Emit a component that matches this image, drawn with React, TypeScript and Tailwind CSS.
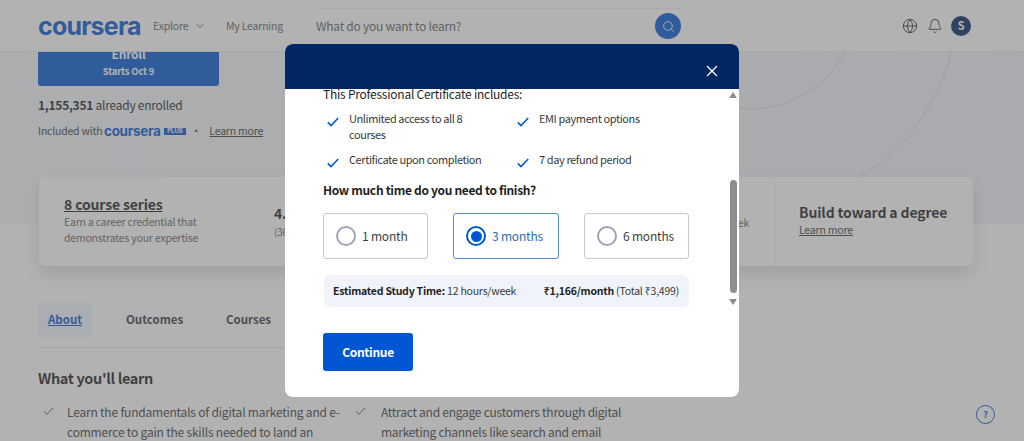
import React from "react";
import { Check, ChevronDown, Globe, Bell, Search, X } from "lucide-react";

function Tick({ className }: { className: string }) {
  return (
    <svg viewBox="0 0 12 10" className={className} fill="none" stroke="currentColor" strokeWidth="1.5">
      <path d="M0.8 5.4 L4 8.6 L11.2 1" />
    </svg>
  );
}

function Feature({ children, wide }: { children: React.ReactNode; wide?: boolean }) {
  return (
    <div className="flex items-start">
      <Tick className="mt-[7px] ml-[4px] h-[10px] w-[12px] shrink-0 text-[#0056d2]" />
      <p className={`ml-[10px] text-[11px] leading-[16px] tracking-[-0.4px] text-[#373a3c] ${wide ? "w-[125px]" : ""}`}>{children}</p>
    </div>
  );
}

function Option({ label, selected, width }: { label: string; selected?: boolean; width: string }) {
  return (
    <div
      className={`flex h-[46px] items-center rounded-[3px] border pl-[12px] ${width} ${
        selected ? "border-[#4f8fc6]" : "border-[#c4c6cc]"
      }`}
    >
      {selected ? (
        <span className="flex h-[20px] w-[20px] items-center justify-center rounded-full border-2 border-[#0056d2]">
          <span className="h-[11px] w-[11px] rounded-full bg-[#0056d2]" />
        </span>
      ) : (
        <span className="h-[20px] w-[20px] rounded-full border-2 border-[#9fa3b8]" />
      )}
      <span className={`ml-[6px] text-[12px] leading-[20px] tracking-[-0.2px] ${selected ? "text-[#2d6db5]" : "text-[#3d3f42]"}`}>{label}</span>
    </div>
  );
}

export default function App() {
  return (
    <div className="relative h-[441px] w-[1024px] overflow-hidden bg-white font-['Noto_Sans_CJK_SC','Noto_Sans',sans-serif] tracking-[-0.2px] text-[#1f1f1f]">
      {/* Site header */}
      <header className="flex h-[52px] items-center border-b border-[#e5e7ea] bg-white pl-[38px]">
        <span className="w-[102px] font-['Inter',sans-serif] text-[25px] leading-[30px] font-bold tracking-[-0.8px] text-[#0056d2]">
          coursera
        </span>
        <span className="ml-[13px] w-[35px] text-[10.5px] text-[#5b5f63]">Explore</span>
        <ChevronDown className="ml-[6px] h-[12px] w-[12px] text-[#5b5f63]" strokeWidth={2} />
        <span className="ml-[20px] w-[57px] text-[10.5px] text-[#5b5f63]">My Learning</span>
        <div className="ml-[33px] flex h-[36px] w-[365px] items-center justify-between border-t border-[#ededed]">
          <span className="text-[12px] tracking-[-0.25px] text-[#5b5f63]">What do you want to learn?</span>
          <span className="flex h-[26px] w-[26px] items-center justify-center rounded-full bg-[#0056d2]">
            <Search className="h-[13px] w-[13px] text-white" strokeWidth={1.6} />
          </span>
        </div>
        <div className="ml-[221px] flex items-center">
          <Globe className="h-[16px] w-[16px] text-[#333]" strokeWidth={1.5} />
          <Bell className="ml-[9px] h-[16px] w-[16px] text-[#333]" strokeWidth={1.5} />
          <span className="ml-[8px] flex h-[20px] w-[20px] items-center justify-center rounded-full bg-[#002761] text-[11px] font-bold text-white">
            S
          </span>
        </div>
      </header>

      {/* Hero */}
      <section className="relative h-[172px] overflow-hidden bg-[linear-gradient(90deg,#f4f7fb,#f0f4f9_50%,#eef2f8)] pl-[38px]">
        <svg className="absolute top-0 left-[700px] h-[172px] w-[324px]" viewBox="700 52 324 172" fill="none" stroke="#d4d8de">
          <circle cx="750" cy="1" r="108" />
          <circle cx="750" cy="1" r="208" />
        </svg>
        <div className="relative -mt-[7px] flex h-[41px] w-[181px] flex-col items-center rounded-[3px] bg-[#0056d2] text-white">
          <span className="text-[12px] leading-[18px] font-semibold">Enroll</span>
          <span className="-mt-[1px] text-[9.5px] leading-[18px] font-semibold tracking-[-0.2px]">Starts Oct 9</span>
        </div>
        <p className="relative mt-[10px] text-[12px] leading-[18px] tracking-[-0.25px]">
          <b className="font-bold">1,155,351</b> already enrolled
        </p>
        <div className="relative mt-[8px] flex items-center whitespace-nowrap text-[10.5px] leading-[18px] text-[#373a3c]">
          <span className="w-[64px]">Included with</span>
          <span className="ml-[2px] w-[56px] font-['Inter',sans-serif] text-[13.5px] leading-[16px] font-bold tracking-[-0.3px] text-[#0056d2]">
            coursera
          </span>
          <span className="ml-[4px] flex h-[7px] w-[22px] items-center justify-center bg-[#0056d2] font-['Inter',sans-serif] text-[6px] font-bold tracking-normal text-white">
            PLUS
          </span>
          <span className="ml-[5px]">•</span>
          <span className="ml-[8px] underline">Learn more</span>
        </div>
      </section>

      {/* Stats card */}
      <div className="relative z-10 -mt-[47px] ml-[39px] flex h-[89px] w-[934px] items-stretch rounded-[6px] bg-white shadow-[0_8px_16px_rgba(0,0,0,0.14)]">
        <div className="w-[235px] pt-[17px] pl-[25px]">
          <p className="text-[14px] leading-[20px] font-semibold tracking-[-0.15px] text-[#1f1f1f] underline">8 course series</p>
          <p className="mt-0 text-[10.5px] leading-[16px] text-[#636363]">Earn a career credential that</p>
          <p className="text-[10.5px] leading-[16px] text-[#636363]">demonstrates your expertise</p>
        </div>
        <div className="w-[200px] pt-[25px]">
          <p className="text-[14px] leading-[22px] font-semibold">4.7</p>
          <p className="text-[10px] leading-[16px] text-[#636363]">(36,000 reviews)</p>
        </div>
        <div className="w-[301px] pt-[38px] pr-[26px] text-right">
          <p className="text-[10.5px] leading-[16px] text-[#636363]">10 hours a week</p>
        </div>
        <div className="flex-1 border-l border-[#f6f6f6] pt-[25px] pl-[23px]">
          <p className="text-[14px] leading-[20px] font-semibold tracking-[-0.12px] text-[#1f1f1f]">Build toward a degree</p>
          <p className="text-[10.5px] leading-[16px] text-[#373a3c] underline">Learn more</p>
        </div>
      </div>

      {/* Tabs */}
      <nav className="mt-[37px] ml-[38px] flex h-[34px] items-center text-[11.5px] font-semibold tracking-normal text-[#373a3c]">
        <span className="flex h-[34px] w-[54px] items-center justify-center rounded-[3px] bg-[#f0f6ff] text-[#0056d2] underline">
          About
        </span>
        <span className="ml-[34px] w-[56px]">Outcomes</span>
        <span className="ml-[44px]">Courses</span>
      </nav>
      <div className="mt-[10px] ml-[40px] h-px w-[680px] bg-[#e5e7ea]" />

      {/* What you'll learn */}
      <h2 className="mt-[18px] ml-[38px] text-[14.5px] leading-[24px] font-semibold tracking-[-0.35px]">What you'll learn</h2>
      <div className="mt-[12px] ml-[42px] flex">
        <div className="flex w-[312px]">
          <Check className="mt-[3px] h-[13px] w-[13px] shrink-0 text-[#333]" strokeWidth={1.5} />
          <p className="ml-[12px] w-[280px] text-[12px] leading-[20px] tracking-[-0.2px] text-[#373a3c]">
            Learn the fundamentals of digital marketing and e-commerce to gain the skills needed to land an entry-level job
          </p>
        </div>
        <div className="flex">
          <Check className="mt-[3px] h-[13px] w-[13px] shrink-0 text-[#333]" strokeWidth={1.5} />
          <p className="ml-[14px] w-[260px] text-[12px] leading-[20px] tracking-[-0.26px] text-[#373a3c]">
            Attract and engage customers through digital marketing channels like search and email
          </p>
        </div>
      </div>

      {/* Help button */}
      <span className="absolute top-[405px] left-[976px] flex h-[19px] w-[19px] items-center justify-center rounded-full border border-[#0056d2] text-[9px] font-semibold text-[#0056d2]">
        ?
      </span>

      {/* Dim layer */}
      <div className="absolute inset-0 z-20 bg-[rgba(97,97,97,0.49)]" />

      {/* Modal */}
      <div className="absolute top-[44px] left-[285px] z-30 flex h-[353px] w-[454px] flex-col overflow-hidden rounded-[8px] bg-white">
        <div className="flex h-[45px] shrink-0 items-end justify-end bg-[#002761] pr-[18px] pb-[9px]">
          <X className="h-[18px] w-[18px] text-white" strokeWidth={1.8} />
        </div>
        <div className="relative flex-1 overflow-hidden pl-[38px]">
          <p className="-mt-[4px] text-[12px] leading-[18px] tracking-[-0.24px] text-[#1f1f1f]">This Professional Certificate includes:</p>
          <div className="mt-[7px] grid w-[366px] grid-cols-[190px_1fr] gap-y-[9px]">
            <Feature wide>Unlimited access to all 8 courses</Feature>
            <Feature>EMI payment options</Feature>
            <Feature>Certificate upon completion</Feature>
            <Feature>7 day refund period</Feature>
          </div>
          <p className="mt-[12px] text-[12px] leading-[20px] font-semibold tracking-[-0.32px] text-[#1f1f1f]">How much time do you need to finish?</p>
          <div className="mt-[13px] flex w-[366px] justify-between">
            <Option label="1 month" width="w-[105px]" />
            <Option label="3 months" selected width="w-[106px]" />
            <Option label="6 months" width="w-[105px]" />
          </div>
          <div className="mt-[16px] ml-px flex h-[32px] w-[365px] items-center justify-between rounded-[6px] bg-[#f0f4fa] pr-[10px] pl-[9px] text-[10.5px] tracking-[-0.22px] text-[#373a3c]">
            <span>
              <b className="font-semibold text-[#1f1f1f]">Estimated Study Time:</b> 12 hours/week
            </span>
            <span>
              <b className="font-semibold text-[#1f1f1f]">₹1,166/month</b> (Total ₹3,499)
            </span>
          </div>
          <button className="mt-[26px] flex h-[38px] w-[90px] items-center justify-center rounded-[3px] bg-[#0056d2] text-[12px] font-semibold tracking-[-0.3px] text-white">
            Continue
          </button>

          {/* Scrollbar */}
          <div className="absolute top-0 right-[2px] flex w-[8px] flex-col items-center pt-[3px]">
            <span className="h-0 w-0 border-x-[4px] border-b-[6px] border-x-transparent border-b-[#8d8d8d]" />
            <span className="mt-[82px] h-[113px] w-[7px] rounded-[4px] bg-[#8d8d8d]" />
            <span className="mt-[6px] h-0 w-0 border-x-[4px] border-t-[6px] border-x-transparent border-t-[#8d8d8d]" />
          </div>
        </div>
      </div>
    </div>
  );
}
